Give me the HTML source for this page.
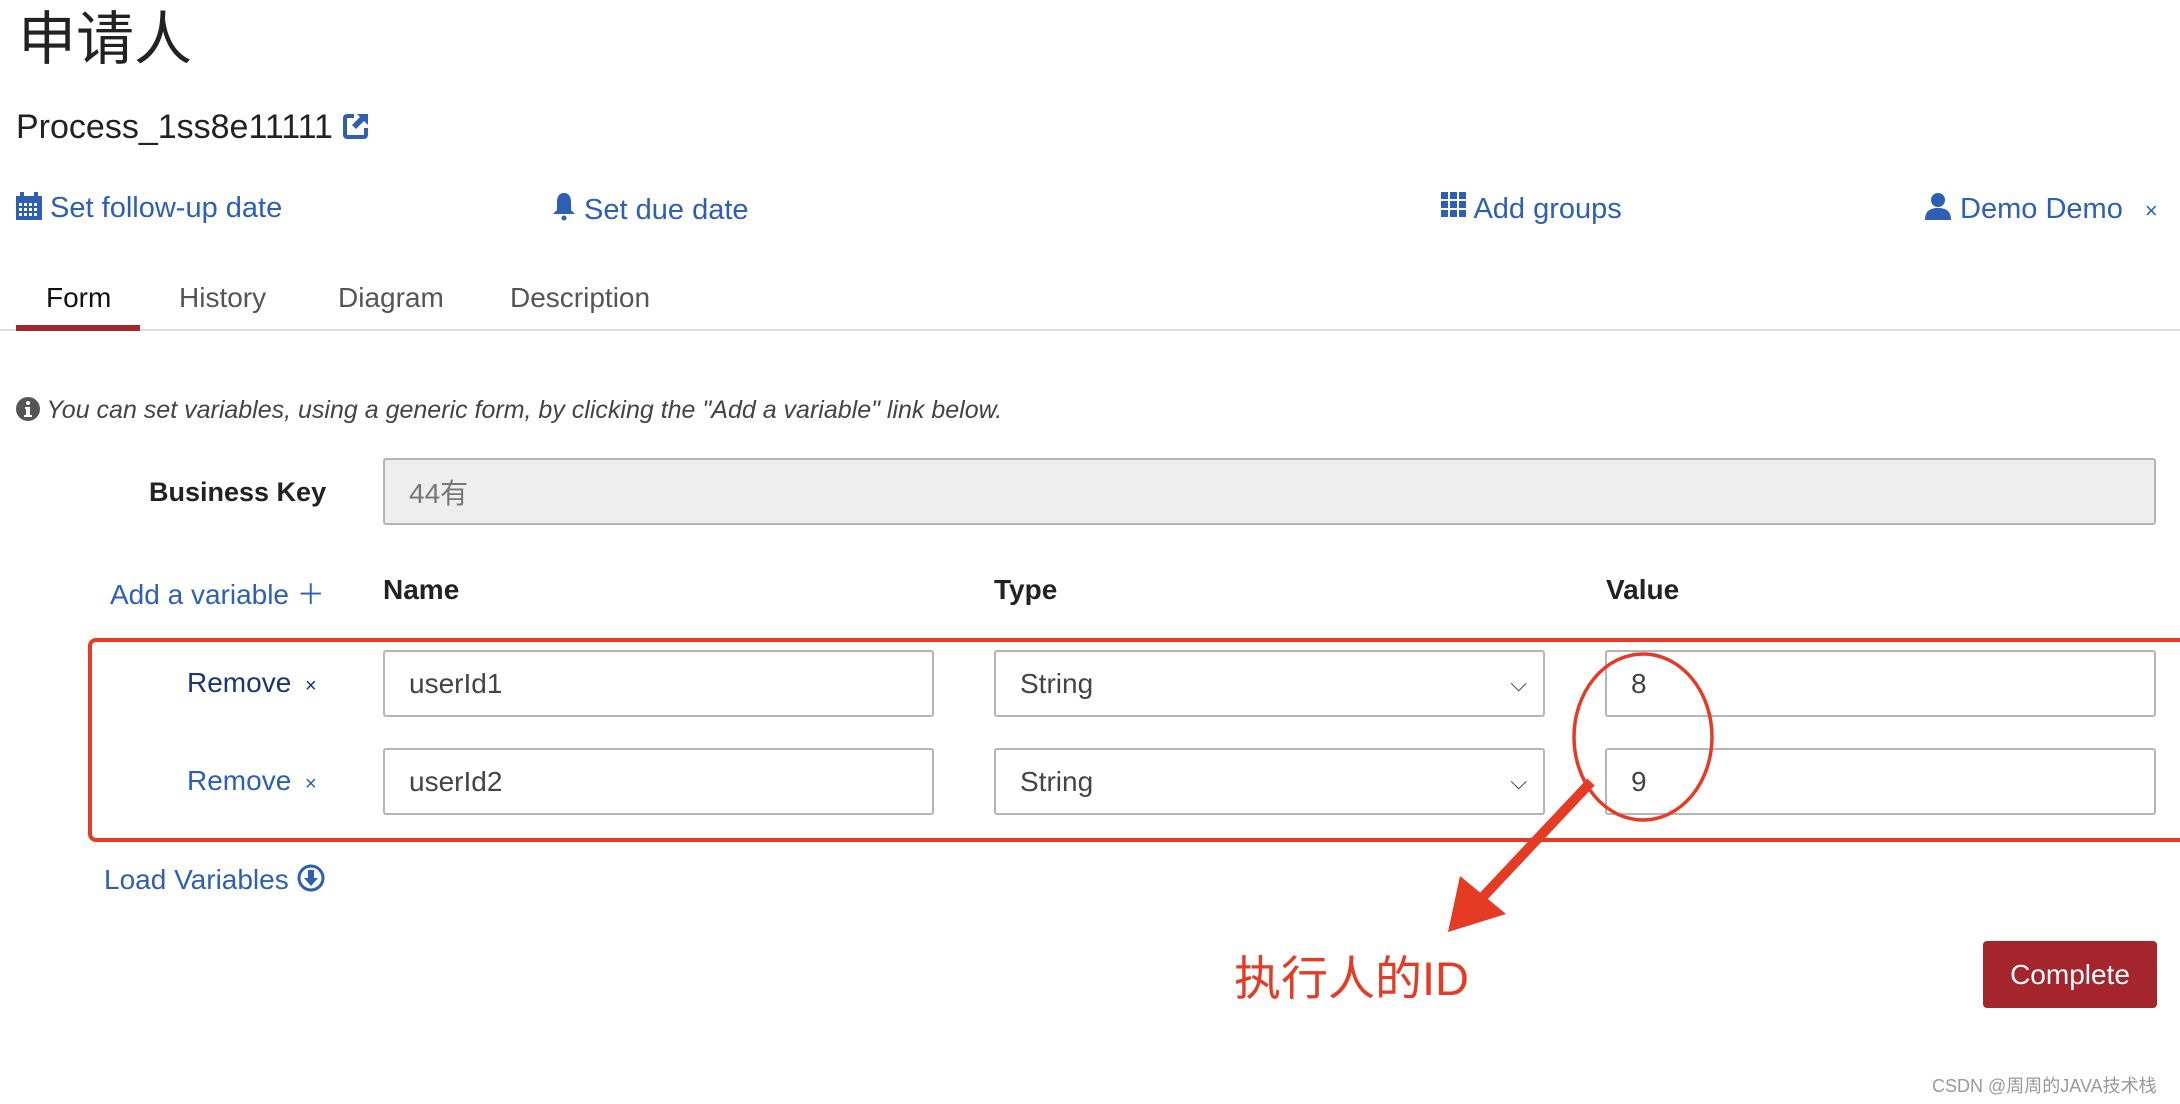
<!DOCTYPE html>
<html><head><meta charset="utf-8"><style>
body{margin:0;width:2180px;height:1104px;background:#fff;position:relative;overflow:hidden;font-family:"Liberation Sans","Noto Sans CJK SC",sans-serif;color:#333}
.a{position:absolute;white-space:nowrap}
.blue{color:#2d5fb5}
.inp{position:absolute;border:2px solid #b5b5b5;border-radius:3px;box-sizing:border-box;background:#fff;font-size:28px;color:#444;padding-left:24px;display:flex;align-items:center}
</style></head><body>
<div class="a" style="left:18px;top:-8px;font-size:58px;color:#222;font-family:'Noto Sans CJK SC',sans-serif">申请人</div>
<div class="a" style="left:16px;top:108px;font-size:34px;color:#222">Process_1ss8e11111 <svg width="28" height="28" viewBox="0 0 28 28" style="vertical-align:-2px"><path d="M12 4H5a2 2 0 0 0-2 2v17a2 2 0 0 0 2 2h17a2 2 0 0 0 2-2v-7" fill="none" stroke="#2d5fb5" stroke-width="4"/><path d="M15 2h11v11l-4-4-8 8-4-4 8-8z" fill="#2d5fb5"/></svg></div>

<div class="a blue" style="left:16px;top:192px;font-size:29px"><svg width="26" height="28" viewBox="0 0 26 28" style="vertical-align:-3px"><rect x="0" y="4" width="26" height="24" fill="#2d5fb5"/><rect x="4" y="0" width="4" height="7" fill="#2d5fb5"/><rect x="18" y="0" width="4" height="7" fill="#2d5fb5"/><g fill="#fff"><rect x="3" y="11" width="3" height="3"/><rect x="8" y="11" width="3" height="3"/><rect x="13" y="11" width="3" height="3"/><rect x="18" y="11" width="3" height="3"/><rect x="3" y="16" width="3" height="3"/><rect x="8" y="16" width="3" height="3"/><rect x="13" y="16" width="3" height="3"/><rect x="18" y="16" width="3" height="3"/><rect x="3" y="21" width="3" height="3"/><rect x="8" y="21" width="3" height="3"/><rect x="13" y="21" width="3" height="3"/><rect x="18" y="21" width="3" height="3"/></g></svg> Set follow-up date</div>
<div class="a blue" style="left:552px;top:192px;font-size:29px"><svg width="24" height="30" viewBox="0 0 24 30" style="vertical-align:-3px"><path d="M12 1c-5 0-7 4-7 9v8l-4 4h22l-4-4v-8c0-5-2-9-7-9z" fill="#2d5fb5"/><circle cx="12" cy="26" r="2.5" fill="#2d5fb5"/></svg> Set due date</div>
<div class="a blue" style="left:1441px;top:192px;font-size:29px"><svg width="26" height="26" viewBox="0 0 26 26" style="vertical-align:0px"><g fill="#2d5fb5"><rect x="0" y="0" width="7" height="7"/><rect x="9" y="0" width="7" height="7"/><rect x="18" y="0" width="7" height="7"/><rect x="0" y="9" width="7" height="7"/><rect x="9" y="9" width="7" height="7"/><rect x="18" y="9" width="7" height="7"/><rect x="0" y="18" width="7" height="7"/><rect x="9" y="18" width="7" height="7"/><rect x="18" y="18" width="7" height="7"/></g></svg> Add groups</div>
<div class="a blue" style="left:1924px;top:192px;font-size:29px"><svg width="28" height="28" viewBox="0 0 28 28" style="vertical-align:-2px"><circle cx="14" cy="8" r="7" fill="#2d5fb5"/><path d="M1 28c0-9 5-12 13-12s13 3 13 12z" fill="#2d5fb5"/></svg> Demo Demo <span style="font-size:22px;margin-left:14px">×</span></div>

<div class="a" style="left:46px;top:282px;font-size:28px;color:#111">Form</div>
<div class="a" style="left:179px;top:282px;font-size:28px;color:#555">History</div>
<div class="a" style="left:338px;top:282px;font-size:28px;color:#555">Diagram</div>
<div class="a" style="left:510px;top:282px;font-size:28px;color:#555">Description</div>
<div class="a" style="left:0;top:329px;width:2180px;height:2px;background:#ddd"></div>
<div class="a" style="left:16px;top:325px;width:124px;height:6px;background:#a4262c"></div>

<div class="a" style="left:16px;top:396px;font-size:25px;font-style:italic;color:#444"><svg width="24" height="24" viewBox="0 0 24 24" style="vertical-align:-3px"><circle cx="12" cy="12" r="12" fill="#555"/><circle cx="12" cy="6" r="2" fill="#fff"/><path d="M9 10h5v8h2v2H8v-2h2v-6H9z" fill="#fff"/></svg> You can set variables, using a generic form, by clicking the "Add a variable" link below.</div>

<div class="a" style="left:149px;top:477px;font-size:27px;font-weight:bold;color:#222">Business Key</div>
<div class="inp" style="left:383px;top:458px;width:1773px;height:67px;background:#eee;color:#777">44有</div>

<div class="a blue" style="left:110px;top:573px;font-size:28px">Add a variable ＋</div>
<div class="a" style="left:383px;top:574px;font-size:28px;font-weight:bold;color:#222">Name</div>
<div class="a" style="left:994px;top:574px;font-size:28px;font-weight:bold;color:#222">Type</div>
<div class="a" style="left:1606px;top:574px;font-size:28px;font-weight:bold;color:#222">Value</div>

<div class="a" style="left:187px;top:667px;font-size:28px;color:#1a3570">Remove <span style="font-size:20px;margin-left:6px">×</span></div>
<div class="inp" style="left:383px;top:650px;width:551px;height:67px">userId1</div>
<div class="inp" style="left:994px;top:650px;width:551px;height:67px">String<span style="position:absolute;right:16px;font-size:22px">⌵</span></div>
<div class="inp" style="left:1605px;top:650px;width:551px;height:67px">8</div>

<div class="a blue" style="left:187px;top:765px;font-size:28px">Remove <span style="font-size:20px;margin-left:6px">×</span></div>
<div class="inp" style="left:383px;top:748px;width:551px;height:67px">userId2</div>
<div class="inp" style="left:994px;top:748px;width:551px;height:67px">String<span style="position:absolute;right:16px;font-size:22px">⌵</span></div>
<div class="inp" style="left:1605px;top:748px;width:551px;height:67px">9</div>

<div class="a" style="left:88px;top:638px;width:2120px;height:204px;border:4px solid #e53a24;border-radius:8px;box-sizing:border-box"></div>

<div class="a blue" style="left:104px;top:864px;font-size:28px">Load Variables <svg width="28" height="28" viewBox="0 0 28 28" style="vertical-align:-3px"><circle cx="14" cy="14" r="12" fill="none" stroke="#2d5fb5" stroke-width="3"/><path d="M11 6h6v8h4l-7 8-7-8h4z" fill="#2d5fb5"/></svg></div>

<svg class="a" style="left:0;top:0" width="2180" height="1104">
<ellipse cx="1643" cy="737" rx="69" ry="83" fill="none" stroke="#e53a24" stroke-width="3.5"/>
<line x1="1591" y1="782" x2="1480" y2="900" stroke="#e53a24" stroke-width="10"/>
<polygon points="1448,932 1460,876 1506,914" fill="#e53a24"/>
</svg>
<div class="a" style="left:1234px;top:940px;font-size:47px;color:#e53a24;font-family:'Liberation Sans','Noto Sans CJK SC',sans-serif">执行人的ID</div>

<div class="a" style="left:1983px;top:941px;width:174px;height:67px;background:#a4262c;border-radius:4px;color:#fff;font-size:28px;display:flex;align-items:center;justify-content:center">Complete</div>
<div class="a" style="left:1932px;top:1072px;font-size:18px;color:#999">CSDN @周周的JAVA技术栈</div>
</body></html>
